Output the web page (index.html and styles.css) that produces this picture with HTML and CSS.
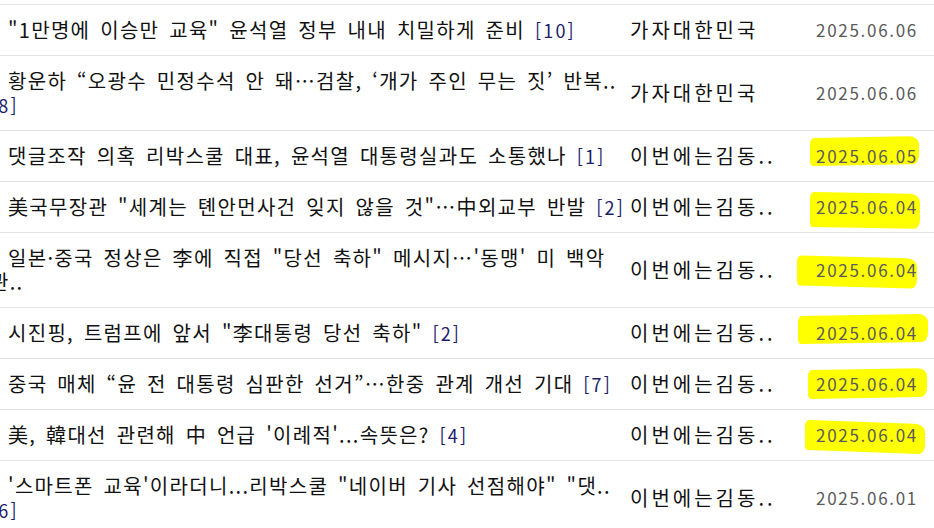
FILE: index.html
```html
<!DOCTYPE html>
<html lang="ko">
<head>
<meta charset="utf-8">
<title>게시판</title>
<link rel="stylesheet" href="styles.css">
</head>
<body>
<ul class="board">
  <li class="row">
    <div class="title">"1만명에 이승만 교육" 윤석열 정부 내내 치밀하게 준비 <span class="cmt">[10]</span></div>
    <div class="author">가자대한민국</div>
    <div class="date"><span class="d">2025.06.06</span></div>
  </li>
  <li class="row">
    <div class="title">황운하 “오광수 민정수석 안 돼…검찰, ‘개가 주인 무는 짓’ 반복.. <span class="cmt">[8]</span></div>
    <div class="author">가자대한민국</div>
    <div class="date"><span class="d">2025.06.06</span></div>
  </li>
  <li class="row">
    <div class="title">댓글조작 의혹 리박스쿨 대표, 윤석열 대통령실과도 소통했나 <span class="cmt">[1]</span></div>
    <div class="author">이번에는김동..</div>
    <div class="date"><span class="d hl hl-a">2025.06.05</span></div>
  </li>
  <li class="row">
    <div class="title">美국무장관 "세계는 톈안먼사건 잊지 않을 것"…中외교부 반발 <span class="cmt">[2]</span></div>
    <div class="author">이번에는김동..</div>
    <div class="date"><span class="d hl hl-b">2025.06.04</span></div>
  </li>
  <li class="row">
    <div class="title">일본·중국 정상은 李에 직접 "당선 축하" 메시지…'동맹' 미 백악관..</div>
    <div class="author">이번에는김동..</div>
    <div class="date"><span class="d hl hl-c">2025.06.04</span></div>
  </li>
  <li class="row">
    <div class="title">시진핑, 트럼프에 앞서 "李대통령 당선 축하" <span class="cmt">[2]</span></div>
    <div class="author">이번에는김동..</div>
    <div class="date"><span class="d hl hl-d">2025.06.04</span></div>
  </li>
  <li class="row">
    <div class="title">중국 매체 “윤 전 대통령 심판한 선거”…한중 관계 개선 기대 <span class="cmt">[7]</span></div>
    <div class="author">이번에는김동..</div>
    <div class="date"><span class="d hl hl-e">2025.06.04</span></div>
  </li>
  <li class="row">
    <div class="title">美, 韓대선 관련해 中 언급 '이례적'...속뜻은? <span class="cmt">[4]</span></div>
    <div class="author">이번에는김동..</div>
    <div class="date"><span class="d hl hl-f">2025.06.04</span></div>
  </li>
  <li class="row">
    <div class="title">'스마트폰 교육'이라더니...리박스쿨 "네이버 기사 선점해야" "댓.. <span class="cmt">[6]</span></div>
    <div class="author">이번에는김동..</div>
    <div class="date"><span class="d">2025.06.01</span></div>
  </li>
</ul>
</body>
</html>
```

FILE: styles.css
```css
html, body {
  margin: 0;
  padding: 0;
  background: #ffffff;
  overflow: hidden;
}

body {
  font-family: "Noto Sans CJK KR", "Noto Sans", sans-serif;
  color: #111111;
}

.board {
  list-style: none;
  margin: 4px 0 0 -10px;
  padding: 0;
  border-top: 1px solid #e2e2e2;
  width: 944px;
}

.row {
  display: grid;
  grid-template-columns: 640px 160px 1fr;
  align-items: center;
  border-bottom: 1px solid #e2e2e2;
  padding: 13px 0;
}

.title {
  font-size: 20px;
  line-height: 24px;
  letter-spacing: 1.3px;
  word-spacing: 3px;
  text-indent: 18px;
  color: #111111;
}

.cmt {
  color: #1c1c6c;
  font-size: 18px;
  line-height: 1;
  letter-spacing: 2.2px;
}

.author {
  font-size: 20px;
  line-height: 24px;
  letter-spacing: 3px;
  color: #111111;
  white-space: nowrap;
}

.date {
  text-align: right;
  padding-right: 16px;
  font-size: 17px;
  line-height: 24px;
}

.d {
  display: inline-block;
  position: relative;
  isolation: isolate;
  letter-spacing: 1.7px;
  color: #5a5a5a;
}

.hl::before {
  content: "";
  position: absolute;
  z-index: -1;
  background: #ffff00;
  border-radius: 4px 10px 6px 3px / 6px 8px 9px 5px;
}

.hl-a::before { left: -6px; right: -1px; top: -7px; bottom: 3px; transform: skewY(-1deg); }
.hl-b::before { left: -6px; right: -2px; top: -2px; bottom: -9px; transform: skewY(1deg); }
.hl-c::before { left: -19px; right: 1px; top: -1px; bottom: -5px; transform: skewY(1.5deg); }
.hl-d::before { left: -18px; right: -10px; top: -6px; bottom: 2px; transform: skewY(-1deg); }
.hl-e::before { left: -8px; right: -9px; top: -3px; bottom: -2px; transform: skewY(-1deg); }
.hl-f::before { left: -11px; right: -7px; top: -1px; bottom: -5px; transform: skewY(2deg); }
```
